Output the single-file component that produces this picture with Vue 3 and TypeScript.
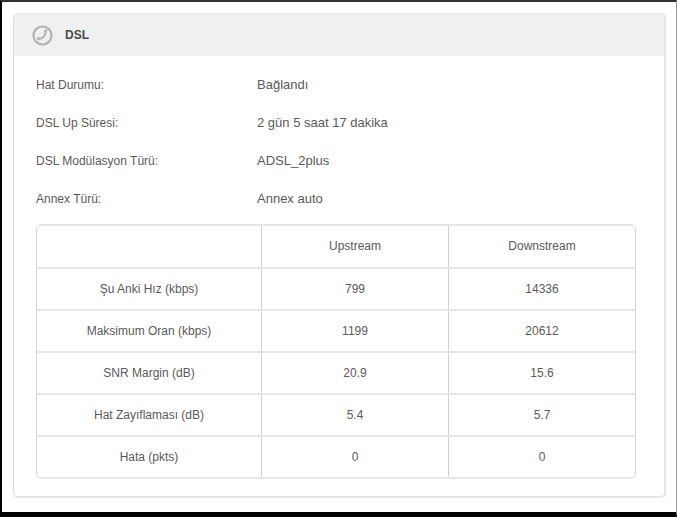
<script setup lang="ts">
const info: [string, string][] = [
  ['Hat Durumu:', 'Bağlandı'],
  ['DSL Up Süresi:', '2 gün 5 saat 17 dakika'],
  ['DSL Modülasyon Türü:', 'ADSL_2plus'],
  ['Annex Türü:', 'Annex auto'],
]
const rows: [string, string, string][] = [
  ['Şu Anki Hız (kbps)', '799', '14336'],
  ['Maksimum Oran (kbps)', '1199', '20612'],
  ['SNR Margin (dB)', '20.9', '15.6'],
  ['Hat Zayıflaması (dB)', '5.4', '5.7'],
  ['Hata (pkts)', '0', '0'],
]
</script>

<template>
  <div class="page">
    <section class="card">
      <header class="head">
        <svg class="icon" width="21" height="21" viewBox="0 0 21 21" fill="none">
          <circle cx="10.5" cy="10.5" r="9" stroke="#b2b2b2" stroke-width="2.2" />
          <path d="M13.6 6.2 C14.4 10 10.4 14.4 6.4 13.8" stroke="#b2b2b2" stroke-width="2" stroke-linecap="round" />
          <path d="M13 5.8 L14.4 5.6 M6.2 13 L6.6 14.4" stroke="#b2b2b2" stroke-width="2" stroke-linecap="round" />
        </svg>
        <span class="title">DSL</span>
      </header>
      <div class="body">
        <div v-for="r in info" :key="r[0]" class="line">
          <span class="label">{{ r[0] }}</span>
          <span class="value">{{ r[1] }}</span>
        </div>
        <div class="table">
          <div class="row first">
            <div class="cell"></div>
            <div class="cell">Upstream</div>
            <div class="cell">Downstream</div>
          </div>
          <div v-for="r in rows" :key="r[0]" class="row">
            <div class="cell">{{ r[0] }}</div>
            <div class="cell">{{ r[1] }}</div>
            <div class="cell">{{ r[2] }}</div>
          </div>
        </div>
      </div>
    </section>
  </div>
</template>

<style>
html, body { margin: 0; background: #fff; }
</style>

<style scoped>
.page {
  box-sizing: border-box;
  width: 677px;
  height: 517px;
  overflow: hidden;
  padding: 11px 10px 0 11px;
  background: #fff;
  border-left: 2px solid #000;
  border-top: 2px solid #333;
  border-right: 1px solid #999;
  border-bottom: 5px solid #000;
  font-family: "Liberation Sans", Arial, sans-serif;
  font-size: 12px;
  color: #5a5a5a;
}
.card {
  box-sizing: border-box;
  width: 653px;
  height: 485px;
  border: solid #e6e6e6;
  border-width: 1px 2px 2px 1px;
  border-left-color: #dcdcdc;
  border-radius: 5px;
  overflow: hidden;
}
.head {
  display: flex;
  align-items: center;
  height: 42px;
  background: #f0f0f0;
  padding-left: 18px;
}
.title {
  margin-left: 12px;
  font-weight: 700;
  color: #4a4a4a;
  font-size: 12px;
}
.body {
  padding: 10px 28px 0 22px;
}
.line {
  display: flex;
  align-items: baseline;
  height: 38px;
  line-height: 38px;
}
.label { width: 221px; }
.value { font-size: 13px; }
.table {
  box-sizing: border-box;
  width: 600px;
  margin-top: 6px;
  border: solid #e6e6e6;
  border-width: 2px 1px;
  border-left-color: #d6d6d6;
  border-right-color: #d6d6d6;
  border-radius: 5px;
  text-align: center;
}
.row {
  display: grid;
  grid-template-columns: 224px 187px 1fr;
  height: 42px;
  border-top: 2px solid #e6e6e6;
  box-sizing: border-box;
}
.row.first { border-top: 0; height: 41px; }
.row.first .cell { padding-bottom: 1px; box-sizing: border-box; }
.cell {
  display: flex;
  align-items: center;
  justify-content: center;
  border-left: 1px solid #d2d2d2;
}
.cell:first-child { border-left: 0; }
</style>
